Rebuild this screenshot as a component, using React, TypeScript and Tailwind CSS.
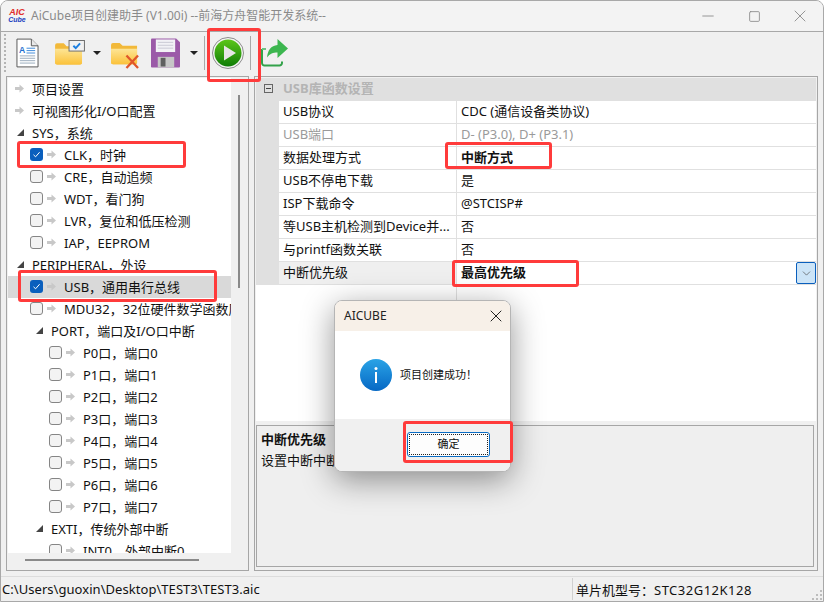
import { ChevronDown, Minus, Square, X } from "lucide-react";

type TreeRow = {
  label: string;
  indent: number; // left padding in px
  kind: "leaf" | "group" | "check";
  checked?: boolean;
  selected?: boolean;
};

const TREE: TreeRow[] = [
  { label: "项目设置", indent: 7, kind: "leaf" },
  { label: "可视图形化I/O口配置", indent: 7, kind: "leaf" },
  { label: "SYS，系统", indent: 9, kind: "group" },
  { label: "CLK，时钟", indent: 22, kind: "check", checked: true },
  { label: "CRE，自动追频", indent: 22, kind: "check" },
  { label: "WDT，看门狗", indent: 22, kind: "check" },
  { label: "LVR，复位和低压检测", indent: 22, kind: "check" },
  { label: "IAP，EEPROM", indent: 22, kind: "check" },
  { label: "PERIPHERAL，外设", indent: 9, kind: "group" },
  { label: "USB，通用串行总线", indent: 22, kind: "check", checked: true, selected: true },
  { label: "MDU32，32位硬件数学函数库", indent: 22, kind: "check" },
  { label: "PORT，端口及I/O口中断", indent: 28, kind: "group" },
  { label: "P0口，端口0", indent: 41, kind: "check" },
  { label: "P1口，端口1", indent: 41, kind: "check" },
  { label: "P2口，端口2", indent: 41, kind: "check" },
  { label: "P3口，端口3", indent: 41, kind: "check" },
  { label: "P4口，端口4", indent: 41, kind: "check" },
  { label: "P5口，端口5", indent: 41, kind: "check" },
  { label: "P6口，端口6", indent: 41, kind: "check" },
  { label: "P7口，端口7", indent: 41, kind: "check" },
  { label: "EXTI，传统外部中断", indent: 28, kind: "group" },
  { label: "INT0，外部中断0", indent: 41, kind: "check" },
];

const PROPS = [
  { name: "USB协议", value: "CDC (通信设备类协议)" },
  { name: "USB端口", value: "D- (P3.0), D+ (P3.1)", disabled: true },
  { name: "数据处理方式", value: "中断方式", bold: true },
  { name: "USB不停电下载", value: "是" },
  { name: "ISP下载命令", value: "@STCISP#" },
  { name: "等USB主机检测到Device并...", value: "否" },
  { name: "与printf函数关联", value: "否" },
  { name: "中断优先级", value: "最高优先级", bold: true, active: true },
];

// red marker boxes drawn over the screenshot
const MARKS = [
  "left-[206px] top-[27px] w-[54px] h-[54px]",
  "left-[16px] top-[140px] w-[169px] h-[27px]",
  "left-[17px] top-[269px] w-[199px] h-[32px]",
  "left-[444px] top-[141px] w-[107px] h-[27px]",
  "left-[451px] top-[259px] w-[127px] h-[27px]",
  "left-[402px] top-[420px] w-[110px] h-[42px]",
];

function GrayArrow() {
  return (
    <svg width="9" height="9" viewBox="0 0 9 9" className="block shrink-0">
      <path d="M0 3h4.5V0.5L9 4.5 4.5 8.5V6H0z" fill="#c8c8c8" />
    </svg>
  );
}

function Triangle() {
  return (
    <svg width="7" height="7" viewBox="0 0 7 7" className="shrink-0">
      <path d="M7 0v7H0z" fill="#444" />
    </svg>
  );
}

function TreeItem({ row }: { row: TreeRow }) {
  return (
    <div
      className={`flex h-[22px] items-center whitespace-nowrap pb-[1px] ${row.selected ? "bg-[#d9d9d9]" : ""}`}
      style={{ paddingLeft: row.indent }}
    >
      {row.kind === "leaf" && (
        <>
          <GrayArrow />
          <span className="ml-[8px]">{row.label}</span>
        </>
      )}
      {row.kind === "group" && (
        <>
          <Triangle />
          <span className="ml-[8px]">{row.label}</span>
        </>
      )}
      {row.kind === "check" && (
        <>
          {row.checked ? (
            <span className="flex h-[13px] w-[13px] shrink-0 items-center justify-center rounded-[3px] bg-[#0a5fbd]">
              <svg width="9" height="9" viewBox="0 0 9 9">
                <path d="M1.5 4.8 3.6 6.8 7.6 2.2" fill="none" stroke="#fff" strokeWidth="1" />
              </svg>
            </span>
          ) : (
            <span className="h-[13px] w-[13px] shrink-0 rounded-[3px] border border-[#858585] bg-[#f3f3f3]" />
          )}
          <span className="ml-[4px]">
            <GrayArrow />
          </span>
          <span className="ml-[8px]">{row.label}</span>
        </>
      )}
    </div>
  );
}

function DocIcon() {
  return (
    <svg width="23" height="30" viewBox="0 0 24 30" className="block shrink-0">
      <path d="M1 .5h15l7 7v22H1z" fill="#fff" stroke="#555" />
      <path d="M16 .5v7h7" fill="#e8e8e8" stroke="#555" />
      <text x="3" y="15" fontSize="9" fontWeight="700" fill="#1f6fd0" fontFamily="Liberation Sans">A</text>
      <path d="M11 10h9M11 12.5h9M11 15h9" stroke="#3b88d8" />
      <path d="M4 18h16M4 20.5h16M4 23h16M4 25.5h16" stroke="#9ab" />
    </svg>
  );
}

function FolderOpenIcon() {
  return (
    <svg width="30" height="25" viewBox="0 0 31 26" className="block shrink-0">
      <defs>
        <linearGradient id="folderA" x1="0" y1="0" x2="0" y2="1">
          <stop offset="0" stopColor="#fde596" />
          <stop offset="1" stopColor="#fbc23a" />
        </linearGradient>
      </defs>
      <path d="M0 5.500a2 2 0 0 1 2-2h7l3 3h16v17a2 2 0 0 1-2 2H2a2 2 0 0 1-2-2z" fill="#f2b93a" />
      <path d="M0 9h28v14.500a2 2 0 0 1-2 2H2a2 2 0 0 1-2-2z" fill="url(#folderA)" />
      <rect x="14.500" y=".5" width="16" height="11" fill="#f1f1f1" stroke="#6b6b6b" />
      <path d="M19 6l2.500 2.500L26 3.500" fill="none" stroke="#1c7fe0" strokeWidth="2" />
    </svg>
  );
}

function FolderDeleteIcon() {
  return (
    <svg width="29" height="27" viewBox="0 0 30 28" className="block shrink-0">
      <defs>
        <linearGradient id="folderB" x1="0" y1="0" x2="0" y2="1">
          <stop offset="0" stopColor="#fde596" />
          <stop offset="1" stopColor="#fbc23a" />
        </linearGradient>
      </defs>
      <path d="M0 3a2 2 0 0 1 2-2h7l3 3h15v17a2 2 0 0 1-2 2H2a2 2 0 0 1-2-2z" fill="#f2b93a" />
      <path d="M0 7h27v14a2 2 0 0 1-2 2H2a2 2 0 0 1-2-2z" fill="url(#folderB)" />
      <path d="M16 14l12 13M28 14L16 27" stroke="#e0562a" strokeWidth="2.400" />
    </svg>
  );
}

function FloppyIcon() {
  return (
    <svg width="29" height="30" viewBox="0 0 30 30" className="block shrink-0">
      <path d="M1 0h25l4 4v25a1 1 0 0 1-1 1H1a1 1 0 0 1-1-1V1a1 1 0 0 1 1-1z" fill="#9b5aa8" />
      <rect x="5" y="1" width="20" height="13" fill="#f2f2f6" />
      <path d="M7 4h16M7 7h16M7 10h16" stroke="#c9c9d4" />
      <rect x="7" y="19" width="17" height="11" fill="#c6c6c6" />
      <rect x="10" y="20" width="5" height="9" fill="#5f5f5f" />
    </svg>
  );
}

function PlayIcon() {
  return (
    <svg width="32" height="32" viewBox="0 0 32 32" className="block shrink-0">
      <defs>
        <linearGradient id="playFill" x1="0" y1="0" x2="0" y2="1">
          <stop offset="0" stopColor="#5cc61a" />
          <stop offset="1" stopColor="#0f7d06" />
        </linearGradient>
      </defs>
      <circle cx="16" cy="16" r="15.500" fill="#f4f4f4" stroke="#8d8d8d" />
      <circle cx="16" cy="16" r="13.500" fill="url(#playFill)" />
      <path d="M12 8.500 24 16 12 23.500z" fill="#e6e6e6" />
    </svg>
  );
}

function ExportIcon() {
  return (
    <svg width="27" height="28" viewBox="0 0 27 28" className="block shrink-0">
      <path d="M1 10v14a2.500 2.500 0 0 0 2.500 2.500h15a2.500 2.500 0 0 0 2.500-2.500v-1.500" fill="none" stroke="#33a24a" strokeWidth="2" />
      <path d="M1 10h4" stroke="#6cc27f" strokeWidth="2" />
      <path d="M16.500 0 27 9.500 16.500 19v-5.500c-4.500 0-7.500 1-10.500 5 .5-7 4-12 10.500-12.500z" fill="#3cb64f" />
    </svg>
  );
}

function DropCaret() {
  return <span className="block h-0 w-0 shrink-0 border-x-[4px] border-t-[4px] border-x-transparent border-t-[#222]" />;
}

function Grip() {
  return (
    <div className="flex w-[3px] shrink-0 flex-col gap-[2px]">
      {Array.from({ length: 10 }).map((_, i) => (
        <span key={i} className="h-[2px] w-[2px] bg-[#b4b4b4]" />
      ))}
    </div>
  );
}

function Toolbar() {
  return (
    <div className="flex h-[44px] shrink-0 items-center bg-[#f0f0f0] pb-[3px] pl-[3px]">
      <Grip />
      <div className="ml-[9px]">
        <DocIcon />
      </div>
      <div className="ml-[16px]">
        <FolderOpenIcon />
      </div>
      <div className="ml-[8px]">
        <DropCaret />
      </div>
      <div className="ml-[10px] mt-[5px]">
        <FolderDeleteIcon />
      </div>
      <div className="ml-[11px]">
        <FloppyIcon />
      </div>
      <div className="ml-[10px]">
        <DropCaret />
      </div>
      <span className="ml-[6px] h-[34px] w-px bg-[#a8a8a8]" />
      <div className="ml-[7px]">
        <PlayIcon />
      </div>
      <span className="ml-[6px] h-[34px] w-px bg-[#a8a8a8]" />
      <div className="ml-[10px]">
        <ExportIcon />
      </div>
    </div>
  );
}

function TreePanel() {
  return (
    <div className="flex w-[243px] shrink-0 flex-col border border-[#a6a6a6] bg-[#f0f0f0] p-px">
      <div className="flex min-h-0 flex-1">
        <div className="w-[223px] shrink-0 overflow-hidden bg-white text-[13px] leading-[22px] text-[#111]">
          {TREE.map((row) => (
            <TreeItem key={row.label} row={row} />
          ))}
        </div>
        <div className="flex-1 pl-[7px] pt-[17px]">
          <div className="h-[193px] w-[2px] bg-[#8a8a8a]" />
        </div>
      </div>
      <div className="h-[16px] shrink-0 pl-[17px] pt-[6px]">
        <div className="h-[2px] w-[174px] bg-[#8a8a8a]" />
      </div>
    </div>
  );
}

function PropertyGrid() {
  return (
    <div className="flex min-h-0 flex-1 flex-col bg-white">
      <div className="flex h-[23px] shrink-0 items-center bg-[#e0e0e0] pb-[2px] pl-[8px]">
        <span className="flex h-[9px] w-[9px] items-center justify-center border border-[#666]">
          <span className="h-px w-[5px] bg-[#444]" />
        </span>
        <span className="ml-[10px] text-[13px] font-bold text-[#b4b4b4]">USB库函数设置</span>
      </div>
      {PROPS.map((p) => (
        <div key={p.name} className="flex h-[23px] shrink-0">
          <div className="w-[23px] shrink-0 bg-[#e0e0e0]" />
          <div
            className={`w-[177px] shrink-0 truncate border-b border-[#e0e0e0] pl-[4px] leading-[20px] ${
              p.active ? "bg-[#efefef]" : ""
            } ${p.disabled ? "text-[#9a9a9a]" : "text-[#111]"}`}
          >
            {p.name}
          </div>
          <div
            className={`relative flex-1 border-b border-l border-[#e0e0e0] pl-[4px] leading-[20px] ${
              p.disabled ? "text-[#9a9a9a]" : "text-[#111]"
            } ${p.bold ? "font-bold" : ""}`}
          >
            {p.value}
            {p.active && (
              <span className="absolute right-0 top-0 flex h-[22px] w-[20px] items-center justify-center rounded-[2px] border border-[#0a5fbd] bg-[#cce4f7]">
                <ChevronDown size={13} strokeWidth={1.2} color="#444" />
              </span>
            )}
          </div>
        </div>
      ))}
      <div className="flex min-h-0 flex-1">
        <div className="ml-[200px] h-full border-l border-[#e0e0e0]" />
      </div>
    </div>
  );
}

function Dialog() {
  return (
    <div className="absolute left-[333px] top-[299px] flex h-[172px] w-[177px] flex-col overflow-hidden rounded-[8px] border border-[#b5b5b5] bg-white shadow-[0_8px_32px_rgba(0,0,0,0.42)]">
      <div className="flex h-[30px] shrink-0 items-center justify-between bg-[#f7f0e8] pl-[9px] pr-[4px] text-[12px] text-[#222]">
        <span>AICUBE</span>
        <X size={20} strokeWidth={1.2} color="#222" />
      </div>
      <div className="flex flex-1 items-center pl-[25px]">
        <svg width="32" height="32" viewBox="0 0 32 32" className="shrink-0">
          <defs>
            <linearGradient id="infoFill" x1="0" y1="0" x2="0" y2="1">
              <stop offset="0" stopColor="#2aa3e6" />
              <stop offset="1" stopColor="#0668c4" />
            </linearGradient>
          </defs>
          <circle cx="16" cy="16" r="16" fill="url(#infoFill)" />
          <rect x="15" y="13" width="2" height="11" fill="#fff" />
          <circle cx="16" cy="9.500" r="1.500" fill="#fff" />
        </svg>
        <span className="ml-[8px] text-[11px] text-[#111]">项目创建成功！</span>
      </div>
      <div className="flex h-[52px] shrink-0 justify-end bg-[#f0f0f0] pr-[20px] pt-[13px]">
        <button className="flex h-[25px] w-[83px] items-center justify-center rounded-[3px] border border-[#0a6cc4] bg-[#fdfdfd] p-px text-[11px] text-[#111]">
          <span className="flex h-full w-full items-center justify-center border border-dotted border-[#222]">确定</span>
        </button>
      </div>
    </div>
  );
}

export default function App() {
  return (
    <div className="relative flex h-[602px] w-[824px] flex-col overflow-hidden rounded-t-[8px] border border-[#a8a8a8] bg-[#f0f0f0] font-['Noto_Sans','Noto_Sans_CJK_SC',sans-serif] text-[13px]">
      {/* title bar */}
      <div className="flex h-[31px] shrink-0 items-center border-b border-[#a8a8a8] bg-[#f3f3f3] text-[12px] text-[#8a8a8a]">
        <div className="ml-[8px] flex w-[16px] flex-col items-center font-['Liberation_Sans',sans-serif] font-bold italic leading-[8px]">
          <span className="text-[9px] text-[#e02c2c]">AIC</span>
          <span className="text-[7px] text-[#2040c0]">Cube</span>
        </div>
        <span className="ml-[6px]">AiCube项目创建助手 (V1.00i) --前海方舟智能开发系统--</span>
        <div className="ml-auto flex items-center text-[#8c8c8c]">
          <span className="flex w-[46px] justify-center">
            <Minus size={18} strokeWidth={1.2} />
          </span>
          <span className="flex w-[46px] justify-center">
            <Square size={13} strokeWidth={1.6} />
          </span>
          <span className="flex w-[46px] justify-center">
            <X size={20} strokeWidth={1.1} />
          </span>
        </div>
      </div>

      <Toolbar />

      {/* main panes */}
      <div className="flex min-h-0 flex-1 gap-[5px] pl-[5px] pr-[5px]">
        <TreePanel />
        <div className="flex min-w-0 flex-1 flex-col border border-[#a6a6a6] p-px">
          <PropertyGrid />
          <div className="mr-[2px] mt-[4px] h-[142px] shrink-0 border border-[#a6a6a6] bg-[#efefef] px-[4px] pt-[3px] leading-[21px] text-[#111]">
            <div className="font-bold">中断优先级</div>
            <div>设置中断中断优先级</div>
          </div>
          <div className="h-[2px] shrink-0" />
        </div>
      </div>

      {/* status bar */}
      <div className="mt-[5px] flex h-[25px] shrink-0 items-center border-t border-[#dcdcdc] text-[#111]">
        <span className="w-[571px] shrink-0 pl-[1px] pt-[2px] tracking-[0.05px]">C:\Users\guoxin\Desktop\TEST3\TEST3.aic</span>
        <span className="h-[22px] border-l border-[#d0d0d0] pl-[3px] leading-[24px]">
          单片机型号：<span className="tracking-[0.5px]">STC32G12K128</span>
        </span>
      </div>

      {/* resize grip */}
      <svg width="11" height="11" viewBox="0 0 11 11" className="absolute bottom-0 right-0">
        <path d="M8 0h2v2H8zM4 4h2v2H4zM8 4h2v2H8zM0 8h2v2H0zM4 8h2v2H4zM8 8h2v2H8z" fill="#bdbdbd" />
      </svg>

      <Dialog />

      {MARKS.map((m) => (
        <div key={m} className={`absolute rounded-[3px] border-[3px] border-[#ff3b3b] ${m}`} />
      ))}
    </div>
  );
}
